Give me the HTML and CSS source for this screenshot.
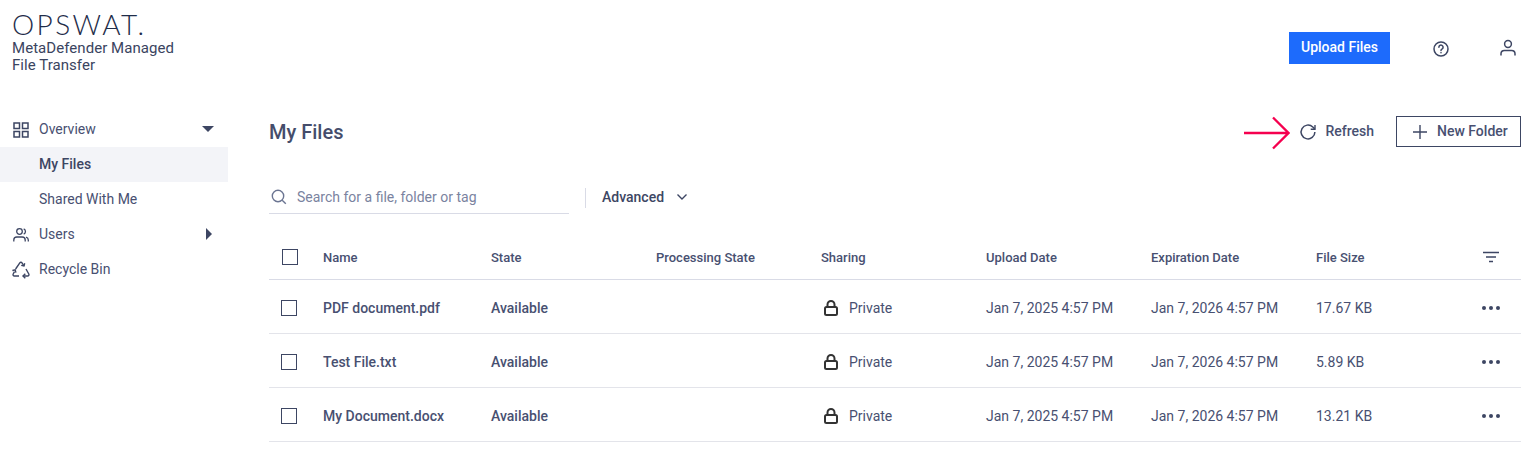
FILE: index.html
```html
<!DOCTYPE html>
<html lang="en">
<head>
<meta charset="utf-8">
<title>My Files</title>
<link rel="stylesheet" href="styles.css">
</head>
<body>
<header class="topbar">
  <div class="brand">
    <div class="logo">OPSWAT.</div>
    <div class="product">MetaDefender Managed<br>File Transfer</div>
  </div>
  <div class="top-actions">
    <button class="upload">Upload Files</button>
    <svg class="help" width="18" height="18" viewBox="0 0 18 18" fill="none" stroke="#3d4663" stroke-width="1.5"><circle cx="9" cy="9" r="7"/><path d="M6.900 7.200a2.100 2.100 0 1 1 3.300 1.700c-.8.5-1.200.9-1.200 1.600" stroke-linecap="round"/><circle cx="9" cy="12.700" r=".5" fill="#3d4663" stroke-width=".6"/></svg>
    <svg class="user" width="18" height="18" viewBox="0 0 18 18" fill="none" stroke="#3d4663" stroke-width="1.5"><circle cx="9" cy="5" r="3.400"/><path d="M2 16.500v-1.700c0-2 1.600-3.300 3.400-3.300h7.200c1.800 0 3.400 1.300 3.400 3.300v1.700"/></svg>
  </div>
</header>
<div class="layout">
  <nav class="sidebar">
    <div class="nav-item">
      <svg class="nav-icon" width="18" height="18" viewBox="0 0 18 18" fill="none" stroke="#3d4663" stroke-width="1.500"><rect x="2" y="2" width="5.500" height="5.500"/><rect x="10.500" y="2" width="5.500" height="5.500"/><rect x="2" y="10.500" width="5.500" height="5.500"/><rect x="10.500" y="10.500" width="5.500" height="5.500"/></svg>
      <span>Overview</span><i class="caret-down"></i>
    </div>
    <div class="nav-item sub active"><span>My Files</span></div>
    <div class="nav-item sub"><span>Shared With Me</span></div>
    <div class="nav-item">
      <svg class="nav-icon" width="18" height="18" viewBox="0 0 18 18" fill="none" stroke="#3d4663" stroke-width="1.300"><circle cx="7.500" cy="5.500" r="2.800"/><path d="M1.800 15.500v-1.500c0-1.800 1.300-3 3-3h5.400c1.700 0 3 1.200 3 3v1.500"/><path d="M11.700 2.900a2.800 2.800 0 0 1 0 5.200M14 11.200c1.400.4 2.300 1.400 2.300 2.800v1.500"/></svg>
      <span>Users</span><i class="caret-right"></i>
    </div>
    <div class="nav-item">
      <svg class="nav-icon wide" width="20" height="20" viewBox="0 0 20 20" fill="none" stroke="#3d4663" stroke-width="1.400"><path d="M4.600 9 8.800 2.800c.6-.8 1.700-.8 2.200 0L13 6"/><path d="M13.700 3.300 13 6l-2.800-.6"/><path d="M15 9l2.800 5c.5 1-.1 2-1.200 2H12"/><path d="M14.300 18.200 12 16l2.300-2.200"/><path d="M8 16H3.400c-1.100 0-1.700-1.100-1.200-2l1.300-2.300"/><path d="M1.400 10.500l2.800-.7.700 2.800"/></svg>
      <span>Recycle Bin</span>
    </div>
  </nav>
  <main class="content">
    <div class="title-row">
      <h1>My Files</h1>
      <div class="title-actions">
        <button class="refresh">
          <svg width="18" height="18" viewBox="0 0 18 18" fill="none" stroke="#3d4663" stroke-width="1.500"><path d="M15.900 9a6.900 6.900 0 1 1-2.100-5l1.900 1.900"/><path d="M16 2v4.300h-4.300" stroke-width="1.400"/></svg>
          Refresh
        </button>
        <button class="new-folder">
          <svg width="16" height="16" viewBox="0 0 16 16" stroke="#3d4663" stroke-width="1.400"><path d="M8 1v14M1 8h14"/></svg>
          New Folder
        </button>
      </div>
    </div>
    <div class="filter-row">
      <div class="search">
        <svg width="18" height="18" viewBox="0 0 18 18" fill="none" stroke="#6b7592" stroke-width="1.400"><circle cx="8" cy="8" r="5.700"/><path d="M12.200 12.200 15.800 15.800"/></svg>
        <span>Search for a file, folder or tag</span>
      </div>
      <div class="divider"></div>
      <div class="advanced">Advanced
        <svg width="12" height="8" viewBox="0 0 12 8" fill="none" stroke="#3d4663" stroke-width="1.400"><path d="M1.500 1.500 6 6l4.500-4.500"/></svg>
      </div>
    </div>
    <div class="table">
      <div class="row head">
        <div class="cell-check"><span class="check head-check"></span></div>
        <div>Name</div><div>State</div><div>Processing State</div><div>Sharing</div><div>Upload Date</div><div>Expiration Date</div><div>File Size</div>
        <div class="cell-end"><svg class="filter" width="16" height="12" viewBox="0 0 16 12" stroke="#3d4663" stroke-width="1.400"><path d="M0 1.500h16M3 6h10M6 10.500h4"/></svg></div>
      </div>
      <div class="row">
        <div class="cell-check"><span class="check"></span></div>
        <div class="strong">PDF document.pdf</div><div class="strong">Available</div><div></div>
        <div class="sharing"><svg class="lock" width="16" height="18" viewBox="0 0 16 18" fill="none" stroke="#333" stroke-width="2"><rect x="2" y="8" width="12" height="8" rx="1.500"/><path d="M4.500 8V5.500a3.500 3.500 0 0 1 7 0V8"/></svg>Private</div>
        <div>Jan 7, 2025 4:57 PM</div><div>Jan 7, 2026 4:57 PM</div><div>17.67 KB</div>
        <div class="cell-end"><span class="dots"><i></i><i></i><i></i></span></div>
      </div>
      <div class="row">
        <div class="cell-check"><span class="check"></span></div>
        <div class="strong">Test File.txt</div><div class="strong">Available</div><div></div>
        <div class="sharing"><svg class="lock" width="16" height="18" viewBox="0 0 16 18" fill="none" stroke="#333" stroke-width="2"><rect x="2" y="8" width="12" height="8" rx="1.500"/><path d="M4.500 8V5.500a3.500 3.500 0 0 1 7 0V8"/></svg>Private</div>
        <div>Jan 7, 2025 4:57 PM</div><div>Jan 7, 2026 4:57 PM</div><div>5.89 KB</div>
        <div class="cell-end"><span class="dots"><i></i><i></i><i></i></span></div>
      </div>
      <div class="row">
        <div class="cell-check"><span class="check"></span></div>
        <div class="strong">My Document.docx</div><div class="strong">Available</div><div></div>
        <div class="sharing"><svg class="lock" width="16" height="18" viewBox="0 0 16 18" fill="none" stroke="#333" stroke-width="2"><rect x="2" y="8" width="12" height="8" rx="1.500"/><path d="M4.500 8V5.500a3.500 3.500 0 0 1 7 0V8"/></svg>Private</div>
        <div>Jan 7, 2025 4:57 PM</div><div>Jan 7, 2026 4:57 PM</div><div>13.21 KB</div>
        <div class="cell-end"><span class="dots"><i></i><i></i><i></i></span></div>
      </div>
    </div>
  </main>
</div>
<svg class="annotation" width="46" height="34" viewBox="0 0 46 34" fill="none" stroke="#f5004f" stroke-width="2.300"><path d="M0 17h43M29 1.500 44.500 17 29 32.500"/></svg>
</body>
</html>
```
FILE: styles.css
```css
* { box-sizing: border-box; }
html, body { margin: 0; padding: 0; }
body {
  position: relative;
  width: 1531px;
  height: 465px;
  overflow: hidden;
  background: #fff;
  font-family: Roboto, "Liberation Sans", sans-serif;
  font-size: 14px;
  color: #3d4663;
}
button { font: inherit; color: inherit; background: none; border: 0; padding: 0; }
.topbar { display: flex; justify-content: space-between; height: 112px; padding: 10px 0 0 12px; }
.brand { display: flex; flex-direction: column; }
.logo {
  font-family: Lato, sans-serif;
  font-weight: 300;
  font-size: 28px;
  line-height: 28px;
  letter-spacing: 2.4px;
  color: #1f2d4a;
}
.product { margin-top: 2px; font-size: 15px; line-height: 17px; letter-spacing: .05px; color: #3a4460; }
.top-actions { display: flex; align-items: center; height: 32px; margin: 22px 0 0; padding-right: 14px; }
.upload { width: 101px; height: 32px; background: #1d6bfc; color: #fff; font-weight: 500; padding-bottom: 2px; }
.help { margin-left: 42px; margin-top: 2px; }
.user { margin-left: 49px; }
.layout { display: flex; }
.sidebar { width: 228px; flex: none; }
.nav-item { display: flex; align-items: center; height: 35px; padding: 0 0 2px 12px; color: #485071; }
.nav-icon { margin-right: 9px; margin-top: 2px; flex: none; }
.nav-icon.wide { margin-left: -1px; margin-right: 8px; }
.nav-item.sub { padding-left: 39px; }
.active { background: #f3f4f8; color: #3d4663; font-weight: 500; }
.caret-down { margin-left: auto; margin-right: 14px; border-left: 6px solid transparent; border-right: 6px solid transparent; border-top: 6px solid #3d4663; }
.caret-right { margin-left: auto; margin-right: 16px; border-top: 6px solid transparent; border-bottom: 6px solid transparent; border-left: 6px solid #3d4663; }
.content { flex: 1; padding: 4px 10px 0 41px; }
.title-row { display: flex; justify-content: space-between; align-items: center; height: 31px; }
h1 { margin: 0; padding-top: 2px; font-size: 20px; font-weight: 500; line-height: 31px; color: #454d6b; }
.title-actions { display: flex; align-items: center; }
.refresh { display: flex; align-items: center; gap: 8px; margin-right: 22px; padding-bottom: 2px; font-weight: 500; color: #485071; }
.refresh svg, .new-folder svg { margin-top: 2px; }
.new-folder { display: flex; align-items: center; gap: 9px; width: 125px; height: 31px; padding: 0 0 2px 15px; border: 1px solid #3d4663; font-weight: 500; color: #485071; }
.filter-row { display: flex; align-items: center; margin-top: 35px; height: 32px; }
.search { display: flex; align-items: center; gap: 9px; width: 300px; height: 32px; padding: 0 0 2px 1px; border-bottom: 1px solid #d9dbe6; color: #7a83a0; }
.divider { width: 1px; height: 20px; background: #d9dbe6; margin: 0 16px; }
.advanced { display: flex; align-items: center; gap: 12px; padding-bottom: 2px; font-weight: 500; }
.table { margin-top: 21px; }
.row {
  display: grid;
  grid-template-columns: 54px 168px 165px 165px 165px 165px 165px 165px 20px;
  align-items: center;
  height: 54px;
  padding-top: 2px;
  border-bottom: 1px solid #e3e4ea;
  color: #485071;
}
.row.head { height: 45px; padding-top: 0; font-weight: 500; font-size: 13px; border-bottom-color: #d9dbe6; }
.strong { font-weight: 500; }
.cell-check { display: flex; padding-left: 12px; }
.check { display: block; width: 16px; height: 16px; border: 1px solid #3d4663; }
.head-check { margin-left: 1px; }
.sharing { display: flex; align-items: center; gap: 10px; }
.lock { flex: none; margin-left: 2px; }
.cell-end { display: flex; justify-content: flex-end; }
.filter { margin-right: 2px; }
.dots { display: flex; gap: 3px; margin-right: 1px; }
.dots i { width: 4px; height: 4px; border-radius: 50%; background: #3d4663; }
.annotation { position: absolute; left: 1244px; top: 116px; }
```
